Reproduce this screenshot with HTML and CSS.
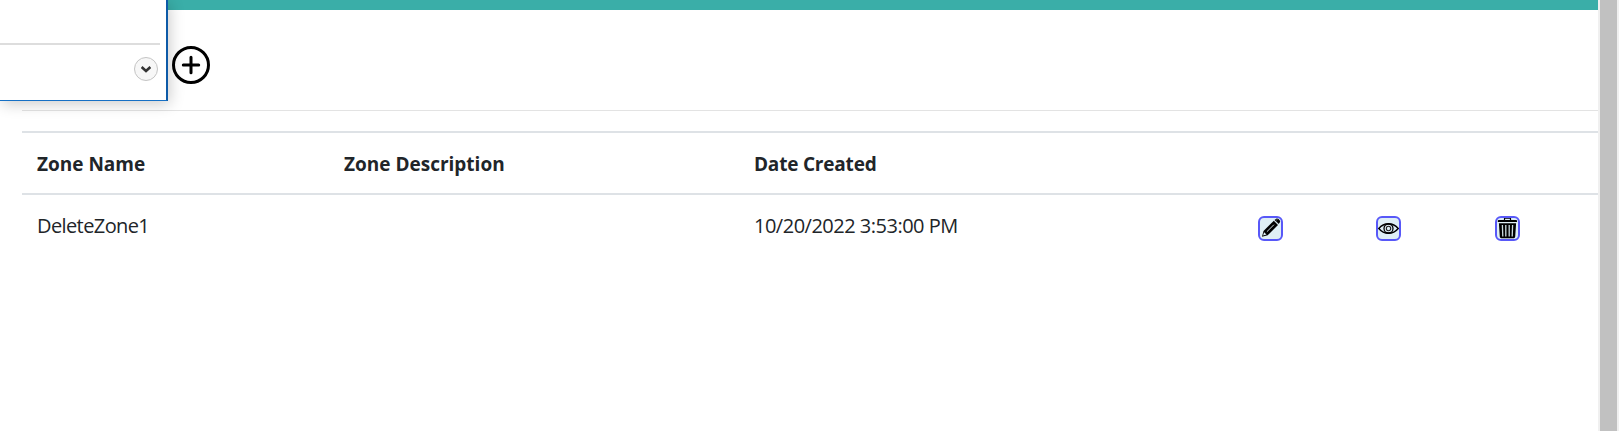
FILE: index.html
```
<!DOCTYPE html>
<html lang="en">
<head>
<meta charset="utf-8">
<title>Zones</title>
<link rel="stylesheet" href="styles.css">
</head>
<body>
<div class="page">
  <div class="main">
    <header class="topbar"></header>
    <div class="toolbar">
      <button class="add" aria-label="Add zone">
        <svg width="38" height="38" viewBox="0 0 38 38" fill="none" stroke="#000"><circle cx="19" cy="19" r="17.5" stroke-width="3"/><path d="M19 11.3v15.4M11.3 19h15.4" stroke-width="3" stroke-linecap="round"/></svg>
      </button>
    </div>
    <div class="table">
      <div class="row head">
        <span class="zone-name">Zone Name</span><span class="zone-desc">Zone Description</span><span class="date-head">Date Created</span><span></span><span></span><span></span>
      </div>
      <div class="row">
        <span class="zone-value">DeleteZone1</span><span></span><span class="date">10/20/2022 3:53:00 PM</span>
        <span class="action"><button class="icon" aria-label="Edit">
          <svg width="21" height="21" viewBox="0 0 21 21"><path d="M2 18.8 3.5 13 13.8 2.8l4.2 4.1L7.7 17.2z" fill="#000"/><path d="M14.5 2.1 16 .9c.8-.6 1.8-.5 2.5.2l1.1 1.1c.7.7.7 1.6.1 2.4l-1 1.3z" fill="#000"/><path d="m3.1 17.6 1-3.4 2.4 2.3z" fill="#dfeff5"/><path d="m6.9 13.7 7-7M14.8 2.7l3.5 3.5" stroke="#cfdde2" stroke-width="1" fill="none"/><path d="m16.5 2 .8-.4" stroke="#dfeff5" stroke-width=".8"/></svg>
        </button></span>
        <span class="action"><button class="icon" aria-label="View">
          <svg width="21" height="21" viewBox="0 0 21 21" fill="none" stroke="#000"><path d="M.8 10.5C3.5 7.2 6.6 5.7 10.5 5.7s7 1.5 9.7 4.8c-2.7 3.3-5.8 4.8-9.7 4.8S3.5 13.8.8 10.5z" stroke-width="1.4"/><circle cx="10.5" cy="10.5" r="4.5" stroke-width="1.3"/><circle cx="10.5" cy="10.5" r="2.2" stroke="#222" stroke-width="1.1"/></svg>
        </button></span>
        <span class="action"><button class="icon" aria-label="Delete">
          <svg width="21" height="21" viewBox="0 0 21 21"><path d="M7.5 2.2V.8q0-.7.7-.7h4.6q.7 0 .7.7v1.4" fill="none" stroke="#000" stroke-width="1.2"/><path d="M.8 4.1V2.8q0-.8.9-.8h17.4q.9 0 .9.8v1.3zM1.9 5.3h17.2l-.9 13.5q-.1 1.4-1.5 1.4H4.3q-1.4 0-1.5-1.4z" fill="#000"/><path d="m5.4 7 .4 11.4M8.8 7v11.4M12.2 7v11.4M15.6 7l-.4 11.4" stroke="#cbdade" stroke-width="1.3"/></svg>
        </button></span>
      </div>
    </div>
  </div>
  <div class="scrollbar"><div class="thumb"></div></div>
</div>
<div class="popup">
  <div class="divider"></div>
  <button class="expand" aria-label="Expand"><svg width="10" height="7" viewBox="0 0 10 7" fill="none" stroke="#333" stroke-width="2.6"><path d="m.6 1 4.4 4 4.4-4"/></svg></button>
</div>
</body>
</html>
```
FILE: styles.css
```
* { box-sizing: border-box; }
body { margin: 0; background: #fff; color: #212529; font: 20px/30px "Open Sans", "Noto Sans", sans-serif; overflow: hidden; }
button { padding: 0; margin: 0; background: none; border: 0; }
svg { display: block; }
.page { display: flex; height: 431px; }
.main { flex: 1; }
.topbar { height: 10px; background: #3aaea8; }
.toolbar { height: 101px; margin-left: 22px; padding: 36px 0 0 150px; border-bottom: 1px solid #e3e3e3; }
.add { display: block; }
.table { margin: 20px 0 0 22px; border-top: 2px solid #dee2e6; }
.row { display: grid; grid-template-columns: 307px 410px 504px 118px 119px 118px; height: 60px; padding: 16px 0 14px; font-weight: 400; }
.row > span { padding-left: 15px; white-space: nowrap; }
.head { height: 62px; font-size: 19px; font-weight: 700; border-bottom: 2px solid #dee2e6; }
.zone-name { letter-spacing: 0; }
.zone-desc { letter-spacing: 0; }
.date-head { letter-spacing: -0.2px; }
.zone-value { letter-spacing: -0.6px; }
.date { letter-spacing: -0.5px; }
.action { padding-top: 5px; }
.icon { display: flex; align-items: center; justify-content: center; width: 25px; height: 25px; border: 2px solid #5858f8; border-radius: 6px; background: #dfeff5; }
.scrollbar { width: 21px; padding: 0 2px; background: #f0f0f0; }
.thumb { height: 100%; background: #c1c1c1; }
.popup { position: absolute; left: 0; top: 0; width: 168px; height: 101px; padding: 43px 6px 0 0; background: #fff; border-right: 2px solid #0d5aa7; border-bottom: 1px solid #1670c5; box-shadow: 2px 3px 14px rgba(0, 0, 0, .2); }
.divider { height: 2px; background: #ddd; }
.expand { display: flex; align-items: center; justify-content: center; width: 24px; height: 24px; margin: 12px 2px 0 auto; border: 1px solid #c4c4c4; border-radius: 50%; background: #f7f7f7; }
```
